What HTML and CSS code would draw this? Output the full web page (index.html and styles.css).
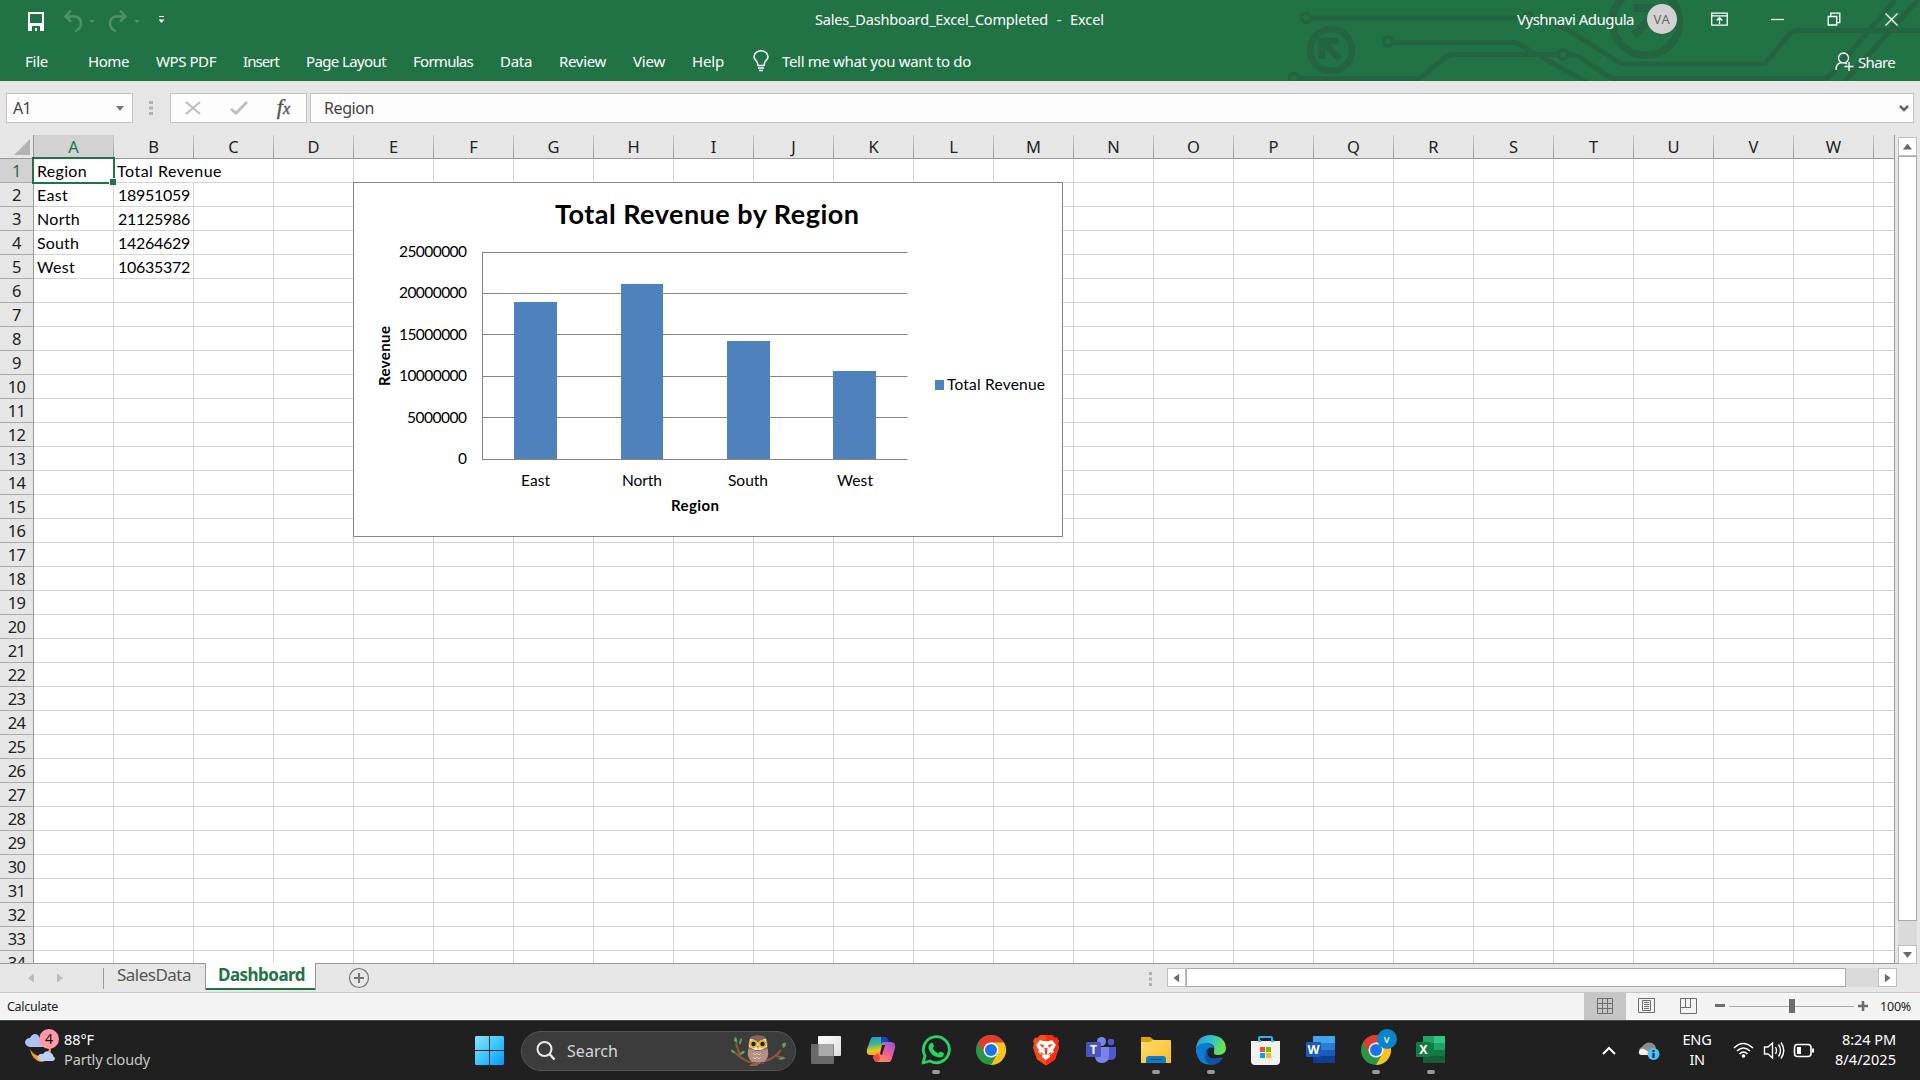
FILE: index.html
```html
<!DOCTYPE html>
<html lang="en">
<head>
<meta charset="utf-8">
<title>Sales_Dashboard_Excel_Completed - Excel</title>
<link rel="stylesheet" href="styles.css">
</head>
<body>
<header class="ribbon">
  <svg class="circuit" width="640" height="81" viewBox="0 0 640 81" fill="none" stroke="#246440" stroke-width="5">
    <circle cx="26" cy="18" r="4.5" stroke-width="3.5"/><path d="M31 18H243"/>
    <circle cx="248" cy="17" r="4.5" stroke-width="3.5"/><path d="M252 20l12 0 24 10 46 29q6 5 12 5h134q5 0 8-4l20-24q4-5.500 10-5.500H640"/>
    <circle cx="108" cy="41.500" r="4.500" stroke-width="3.500"/><path d="M113 42.500h119q5 0 12 5l65 36"/>
    <circle cx="283" cy="54.500" r="4.500" stroke-width="3.500"/><path d="M278 54.500H173q-5 0-9 4l-18 15q-4 5-10 5H19"/>
    <circle cx="14" cy="78" r="4.500" stroke-width="3.500"/>
    <path d="M288 54.500q10 0 17 6l20 14q5 4 12 4h166q5 0 9-5L580 0M636 0L563 83" transform="translate(0 0)" visibility="hidden"/>
    <path d="M288 54.500q10 0 17 6l20 14q5 4 12 4h206q5 0 9-5L615 0M638 0L563 83"/>
    <circle cx="51" cy="50" r="21" stroke-width="6.500"/>
    <path d="M41.500 59V41H59M44 43l15.500 16" stroke-width="6.500"/>
    <circle cx="366" cy="22" r="33.500" stroke-width="7.500"/>
    <path d="M353 8h32v26M383 7l-29 28" stroke-width="8"/>
  </svg>
  <div class="titlebar">
    <svg class="quick" width="180" height="38" viewBox="0 0 180 38" fill="none">
      <path d="M29 15h14v17H29z" stroke="#fff" stroke-width="2"/>
      <path d="M28 25h16v8H28z" fill="#fff"/>
      <path d="M32 28h8v5h-3v-3h-2v3h-3z" fill="#217346"/>
      <path d="M71 13l-5.500 6 5.500 5M66 19h8q7 0 7 7 0 5-6 8" transform="translate(0 -.5)" stroke="#4e8f6b" stroke-width="2.500"/>
      <path d="M89 22h6l-3 3z" fill="#4e8f6b"/>
      <path d="M120 13l5.500 6-5.500 5M125 19h-8q-7 0-7 7 0 5 6 8" transform="translate(0 -.5)" stroke="#4e8f6b" stroke-width="2.500"/>
      <path d="M134 22h6l-3 3z" fill="#4e8f6b"/>
      <path d="M159 18.500h5" stroke="#fff"/><path d="M158.500 21.500h6l-3 3.500z" fill="#fff"/>
    </svg>
    <div class="doc"><span data-w="233">Sales_Dashboard_Excel_Completed</span><span>-</span><span data-w="34">Excel</span></div>
    <div class="account"><span data-w="117">Vyshnavi Adugula</span><div class="avatar"><span data-w="17">VA</span></div></div>
    <svg class="winbtns" width="200" height="38" viewBox="0 0 200 38" fill="none" stroke="#fff" stroke-width="1.300">
      <path d="M9.700 13.200h15.500v12H9.700zM9.700 15.800h15.500M17.500 24v-6M14.700 20.500l2.800-2.800 2.800 2.800"/>
      <path d="M69 19.500h13"/>
      <path d="M126.200 16.500h8.500v8.500h-8.500zM128.800 16v-2.800h9v9.500h-2.800"/>
      <path d="M183.500 13.500l12 12M195.500 13.500l-12 12"/>
    </svg>
  </div>
  <nav class="menu">
    <span class="file" data-w="23">File</span><span data-w="41">Home</span><span data-w="60">WPS PDF</span><span data-w="36">Insert</span><span data-w="80">Page Layout</span><span data-w="60">Formulas</span><span data-w="32">Data</span><span data-w="47">Review</span><span data-w="32">View</span><span data-w="32">Help</span>
    <svg class="bulb" width="16" height="22" viewBox="0 0 16 22" fill="none" stroke="#fff" stroke-width="1.500"><path d="M5 15.500q0-3-2-5Q1 8.500 1 7a7 6.300 0 0 1 14 0q0 1.500-2 3.500t-2 5zM5 18h6M6 20.500h4"/></svg>
    <span data-w="189">Tell me what you want to do</span>
    <div class="share"><svg width="19" height="20" viewBox="0 0 19 20" fill="none" stroke="#fff" stroke-width="1.300"><circle cx="8.500" cy="6" r="5"/><path d="M1 18q0-7 6-7.500M10 11l2 .8M14 10v9M9.500 14.500h9"/></svg><span data-w="37">Share</span></div>
  </nav>
</header>

<section class="formula">
  <div class="box namebox"><span data-w="18">A1</span><svg width="8" height="5"><path d="M0 0h8L4 5z" fill="#777"/></svg></div>
  <svg class="grip" width="4" height="14"><path d="M0 0h4v3H0zM0 5.500h4v3H0zM0 11h4v3H0z" fill="#b0b0b0"/></svg>
  <div class="box fx">
    <svg width="16" height="14" viewBox="0 0 16 14" fill="none" stroke="#bdbdbd" stroke-width="2"><path d="M1 1l14 12M15 1L1 13"/></svg>
    <svg width="18" height="14" viewBox="0 0 18 14" fill="none" stroke="#bdbdbd" stroke-width="2.800"><path d="M1 8l5 4L17 1"/></svg>
    <span class="fxlabel">f<small>x</small></span>
  </div>
  <div class="box input"><span data-w="50">Region</span><svg width="10" height="7" fill="none"><path d="M1 1l4 4 4-4" stroke="#666" stroke-width="2.500"/></svg></div>
</section>

<main class="workarea">
  <div class="sheet">
    <div class="cols" id="cols"></div>
    <div class="rows" id="rows"></div>
    <div class="selection"></div>
    <svg class="chart" width="710" height="355" viewBox="353 182 710 355">
      <rect x="353.500" y="182.500" width="709" height="354" fill="#fff" stroke="#868686"/>
      <g stroke="#868686"><path d="M482.500 252.500H907.500M482 293.500H907.500M482 334.500H907.500M482 376.500H907.500M482 417.500H907.500M482.500 252V460"/></g>
      <g fill="#4f81bd"><path d="M514 302h43v157h-43zM621 284h42v175h-42zM727 341h43v118h-43zM833 371h43v88h-43z"/><path d="M935 380h9v10h-9z"/></g>
      <path d="M482 459.500H907.500" stroke="#868686"/>
      <text class="ctitle" x="555" y="224" textLength="304">Total Revenue by Region</text>
      <g class="axis">
        <text x="399" y="257" textLength="68">25000000</text><text x="399" y="298" textLength="68">20000000</text><text x="399" y="340" textLength="68">15000000</text><text x="399" y="381" textLength="68">10000000</text><text x="407" y="423" textLength="60">5000000</text><text x="458" y="464" textLength="9">0</text>
        <text x="521" y="486" textLength="29">East</text><text x="622" y="486" textLength="40">North</text><text x="728" y="486" textLength="40">South</text><text x="837" y="486" textLength="36">West</text>
        <text x="947" y="390" textLength="98">Total Revenue</text>
        <text class="b" x="671" y="511" textLength="48">Region</text>
        <text class="b" transform="translate(390 386) rotate(-90)" textLength="60">Revenue</text>
      </g>
    </svg>
  </div>
  <div class="vscroll"><div class="btn up"></div><div class="vthumb"></div><div class="vtrack"></div><div class="btn down"></div></div>
</main>

<section class="tabbar">
  <svg class="tabnav" width="104" height="26"><path d="M34 9.500v9l-6-4.500zM57 9.500v9l6-4.500z" fill="#bdbdbd"/><path d="M103.500 4v21" stroke="#999"/></svg>
  <div class="tab"><span data-w="74">SalesData</span></div>
  <div class="tab active"><span data-w="87">Dashboard</span></div>
  <svg class="add" width="22" height="22" fill="none" stroke="#777"><circle cx="11" cy="11" r="9.500" stroke-width="1.200"/><path d="M11 6v10M6 11h10" stroke-width="2"/></svg>
  <svg class="hgrip" width="4" height="14"><path d="M0 0h3v3H0zM0 5.500h3v3H0zM0 11h3v3H0z" fill="#b0b0b0"/></svg>
  <div class="hscroll"><div class="btn left"></div><div class="hthumb"></div><div class="htrack"></div><div class="btn right"></div></div>
</section>

<section class="status">
  <span data-w="51">Calculate</span>
  <svg class="views" width="290" height="27" viewBox="1584 993 290 27" fill="none" stroke="#6d6d6d">
    <path d="M1584 993h42v27h-42z" fill="#c6c6c6" stroke="none"/>
    <path d="M1597.500 998.500h15v15h-15zM1597 1003.500h16M1597 1008.500h16M1602.500 998v16M1607.500 998v16"/>
    <path d="M1638.500 998.500h16v14h-16zM1642.500 1000.500h8v10h-8zM1644 1002.500h5M1644 1004.500h5M1644 1006.500h5M1644 1008.500h5"/>
    <path d="M1680.500 998.500h16v15h-16zM1685.500 998v9M1690.500 998v9M1680 1007.500h11"/>
    <path d="M1715 1005.500h10" stroke-width="3"/><path d="M1729 1006.500h125" stroke="#a8a8a8"/>
    <path d="M1789 999h6v14h-6z" fill="#6d6d6d" stroke="none"/><path d="M1858 1006h10M1863 1001v10" stroke-width="2.500"/>
  </svg>
  <span class="zoom" data-w="31">100%</span>
</section>

<footer class="taskbar">
  <div class="weather">
    <svg width="36" height="36" viewBox="0 0 36 36"><path d="M28 13q1 13-10 15-6 0-10-7 2 12 12 13 12-3 8-21z" fill="#f59b23"/><path d="M8 19q-5-1-5-5 1-4 5-4 3-6 8-3l6 12z" fill="#a9c4f5"/><path d="M19 33q-4-1-3-5 2-3 5-2 3-5 8-1 3 2 2 3 4 3 0 5z" fill="#b9d1fa"/><circle cx="27" cy="11" r="10" fill="#ff99a4"/><text x="23" y="16" class="badge">4</text></svg>
    <div class="wtext"><span data-w="30">88°F</span><span class="dim" data-w="86">Partly cloudy</span></div>
  </div>
  <svg class="start" width="29" height="29"><defs><linearGradient id="win" x2="1" y2="1" gradientUnits="userSpaceOnUse" x1="0" y1="0" gradientTransform="scale(29)"><stop stop-color="#8be0fd"/><stop offset=".5" stop-color="#3cc8ff"/><stop offset="1" stop-color="#0795fb"/></linearGradient></defs><path d="M1 0h13v14H0V1zM15 0h13l1 1v13H15zM0 15h14v14H1l-1-1zM15 15h14v13l-1 1H15z" fill="url(#win)"/></svg>
  <div class="search">
    <svg width="20" height="20" fill="none" stroke="#e6e9ee" stroke-width="2"><circle cx="8.500" cy="8" r="7"/><path d="M13.500 13l5 5.500" stroke-width="2.500"/></svg>
    <span data-w="51">Search</span>
    <svg class="owl" width="56" height="32" viewBox="0 0 56 32"><path d="M3 17q8 7 15 10 8 1 16-1 9-2 16-11M9 21L5 8M45 21l8 2" fill="none" stroke="#8d5637" stroke-width="2.200"/><path d="M3 6q0-4 2-4 2 4 1 6zM8 8q1-5 3-5 0 4-2 7zM0 15q3-1 4 3-3 1-4-3zM9 18q4-4 5-1-2 3-5 3zM51 9q4-3 4 0-1 4-3 4zM47 24q5-3 8-1-4 3-8 1z" fill="#58a760"/><path d="M18 12q-3 8 1 13 3 4 8 4t8-4q4-5 1-13z" fill="#b39182"/><path d="M18 6q0-4 4-5 5-1.500 10 0 4 1 4 5 3 8-4 9-5 2-10 0-7-1-4-9z" fill="#86655d"/><path d="M19 4q5 0 8 4 3-4 8-4l1 8-6 3h-6l-6-3z" fill="#f6e6c8"/><circle cx="22.500" cy="9" r="4" fill="#e0b62a"/><circle cx="31.500" cy="9" r="4" fill="#e0b62a"/><circle cx="22.500" cy="9" r="2.200" fill="#222"/><circle cx="31.500" cy="9" r="2.200" fill="#222"/><path d="M25.700 11h2.600L27 14.500z" fill="#b88b4c"/><path d="M22 18l2 2 2-2 2 2 2-2M22 22l2 2 2-2 2 2 2-2" stroke="#dcc6b8" fill="none"/><path d="M21 27h4v2h-4zM29 27h4v2h-4z" fill="#55458d"/><path d="M18 31q2-4 12-4l-4 4z" fill="#9a5f3f"/></svg>
  </div>
  <div class="apps">
    <div class="app"><svg viewBox="0 0 30 30"><defs><linearGradient id="tv" x2="1" y2="1"><stop stop-color="#fff"/><stop offset="1" stop-color="#ddd"/></linearGradient></defs><rect x="7" y="1" width="23" height="20" rx="1" fill="url(#tv)"/><rect y="9" width="23" height="20" rx="1" fill="#777" opacity=".85"/><path d="M8 9h14v12H8z" fill="#aaa"/></svg></div>
    <div class="app"><svg viewBox="0 0 30 30"><defs><linearGradient id="ca" x2=".2" y2="1"><stop stop-color="#1597e8"/><stop offset=".45" stop-color="#3fb78c"/><stop offset=".8" stop-color="#f4c51c"/><stop offset="1" stop-color="#ffa02a"/></linearGradient><linearGradient id="cb" x1="1" x2=".2" y2="1"><stop stop-color="#8a57e8"/><stop offset=".5" stop-color="#ef5b9b"/><stop offset="1" stop-color="#ff9a4c"/></linearGradient></defs><path d="M23 27H12q-4 0-5-5 4 0 5-4l3-8q1-3 4-3h6q5 0 4 6l-3 10q-1 4-3 4z" fill="url(#cb)"/><path d="M7 2h11q3 0 3 4-3 0-4 4l-3 7q-1 3-4 3H4q-4 0-3-6L4 6q1-4 3-4z" fill="url(#ca)"/><path d="M15 2h3q4 0 5 5h-5q-2 0-3 2z" fill="#1946c8"/><path d="M7 20q4 0 5-2l2 5q-1 4-3 4-4-1-4-7z" fill="#ee4a3b"/><path d="M14 19l2-9h3l-3 10z" fill="#202020"/></svg></div>
    <div class="app run"><svg viewBox="0 0 30 30" fill="none"><path d="M2 28l2-7A13 13 0 1 1 9 26z" stroke="#25d366" stroke-width="2.800" stroke-linejoin="round"/><path d="M10 8q2-1 3 3 0 1-1.500 2 2 4 6 5.500l1.500-2q4 1 4 2.500-1 4-5 3.500-8-1-10.500-9Q7 10 10 8z" fill="#25d366"/></svg></div>
    <div class="app"><svg viewBox="0 0 30 30"><g id="chrome"><circle cx="15" cy="15" r="15" fill="#2a9747"/><path d="M2 7.500A15 15 0 0 1 28 7.500H15L8.500 19z" fill="#e33b2e"/><path d="M28 7.500A15 15 0 0 1 15 30l6.500-11.300L15 7.500z" fill="#fcc31a"/><circle cx="15" cy="15" r="7.500" fill="#fff"/><circle cx="15" cy="15" r="6" fill="#1a73e8"/></g></svg></div>
    <div class="app"><svg viewBox="0 0 30 30"><path d="M9 0h12l3 3 2-.5 2 4-1 2 1 4-4 12-9 6-9-6-4-12 1-4-1-2 2-4L6 3z" fill="#fb4a1c"/><path d="M15 0h6l3 3 2-.5 2 4-1 2 1 4-4 12-9 6z" fill="#ff2a10"/><path d="M9 5l3 1h6l3-1 4 5-3 5 1 2-4 3v2l-4 3-4-3v-2l-4-3 1-2-3-5z" fill="#fff"/><path d="M8 9l5 1-1 3zM22 9l-5 1 1 3zM13.500 13h3l-.5 6-1 1-1-1zM10 17l4 3-4-1zM20 17l-4 3 4-1z" fill="#fb3d18"/></svg></div>
    <div class="app"><svg viewBox="0 0 30 30"><circle cx="15.500" cy="6.500" r="4.500" fill="#7b83eb"/><circle cx="25" cy="7" r="3.200" fill="#5059c9"/><path d="M22 12h8v8q0 5-6 5h-3z" fill="#5059c9"/><path d="M9 12h14v9q0 7-7 7-6 0-7-6z" fill="#7b83eb"/><rect y="7" width="15" height="15" rx="1.500" fill="#4b53bc"/><text x="4" y="19" class="glyph small">T</text></svg></div>
    <div class="app run"><svg viewBox="0 0 30 30"><defs><linearGradient id="fo" x2="1" y2="1"><stop stop-color="#ffdc70"/><stop offset="1" stop-color="#fcbc26"/></linearGradient></defs><path d="M0 3q0-1 1-1h8l4 3h16v8H0z" fill="#e0a008"/><path d="M0 7h9l3-2h17q1 0 1 1v22H0z" fill="url(#fo)"/><path d="M5 28v-4q0-3 3-3h14q3 0 3 3v4z" fill="#0f7cc8"/><path d="M9 24.500h12" stroke="#074f88"/></svg></div>
    <div class="app run"><svg viewBox="0 0 30 30"><defs><linearGradient id="ed" x2="1" y2=".3"><stop stop-color="#239ade"/><stop offset=".6" stop-color="#36c6c0"/><stop offset="1" stop-color="#6be34a"/></linearGradient></defs><path d="M0 14Q1 0 15 0q14 1 15 13 0 7-8 7-5 0-4-3 2-8-6-9Q3 8 0 14z" fill="url(#ed)"/><path d="M0 14Q3 7 11 8q6 1 7 5-6-2-8 4-1 9 8 12Q3 32 0 17z" fill="#0c7bd6"/><path d="M12 13q-3 12 9 10 5-1 6 0-4 7-12 7-7-3-6-10 1-5 3-7z" fill="#1250a4"/></svg></div>
    <div class="app"><svg viewBox="0 0 30 30"><path d="M8 8V3q0-1 1-1h11q1 0 1 1v5" fill="none" stroke="#29b6ec" stroke-width="2"/><path d="M0 6h29v20q0 4-4 4H4q-4 0-4-4z" fill="#f1f1f1"/><path d="M7 5h3v2H7zM20 5h3v2h-3z" fill="#29b6ec"/><path d="M9 12h5v5H9z" fill="#f25022"/><path d="M15 12h5v5h-5z" fill="#7fba00"/><path d="M9 18h5v5H9z" fill="#00a4ef"/><path d="M15 18h5v5h-5z" fill="#ffb900"/></svg></div>
    <div class="app"><svg viewBox="0 0 30 30"><path d="M7 1h22v7H7z" fill="#41a5ee"/><path d="M7 8h22v7H7z" fill="#2b7cd3"/><path d="M7 15h22v6H7z" fill="#185abd"/><path d="M7 21h22v7H7z" fill="#103f91"/><rect y="7" width="15" height="15" rx="1" fill="#185abd"/><text x="1.500" y="19" class="glyph">W</text></svg></div>
    <div class="app run"><svg viewBox="0 0 30 30"><use href="#chrome"/><circle cx="26" cy="4" r="10" fill="#0a84c8"/><text x="22.700" y="7.500" class="glyph tiny">V</text></svg></div>
    <div class="app run"><svg viewBox="0 0 30 30"><path d="M7 1h11v7H7z" fill="#21a366"/><path d="M18 1h11v7H18z" fill="#33c481"/><path d="M7 8h11v7H7z" fill="#107c41"/><path d="M18 8h11v7H18z" fill="#21a366"/><path d="M7 15h22v6H7z" fill="#107c41"/><path d="M7 21h22v7H7z" fill="#185c37"/><rect y="7" width="15" height="15" rx="1" fill="#107c41"/><text x="3.200" y="19" class="glyph">X</text></svg></div>
  </div>
  <svg class="chev" width="16" height="10" fill="none"><path d="M2 8l6-6 6 6" stroke="#fff" stroke-width="2"/></svg>
  <svg class="cloud" width="22" height="20"><path d="M2 12q-2-5 2-6Q8 0 14 2q4 2 4 6v5z" fill="#8d8d8d"/><path d="M3 14q-3-1-2-4 1-3 5-2l10 6z" fill="#eee"/><circle cx="15.500" cy="13" r="6" fill="#4cc2ff"/><path d="M14.500 9h2v2h-2zM14.500 12h2v5h-2z" fill="#111"/></svg>
  <div class="lang"><span data-w="29">ENG</span><span data-w="15">IN</span></div>
  <svg class="tray" width="82" height="22" viewBox="0 0 82 22" fill="none" stroke="#fff" stroke-width="1.600"><path d="M1 9q9-9 19 0M4 12q6.500-6 13 0M6.500 15q4-4 8 0"/><circle cx="10.500" cy="17" r="1.800" fill="#fff" stroke="none"/><path d="M31.500 8h3.500l4.500-4v15L35 15h-3.500zM42.500 8q2 3.500 0 7M45.500 5.500q4 6 0 12M48 3.500q5.500 8 0 16" stroke-width="1.400"/><rect x="61.500" y="5.500" width="16.500" height="12" rx="3"/><path d="M64 8h4v7h-4zM79 9.500h2v4h-2z" fill="#fff" stroke="none"/></svg>
  <div class="clock"><span data-w="54">8:24 PM</span><span data-w="61">8/4/2025</span></div>
</footer>
<script src="app.js"></script>
</body>
</html>
```
FILE: app.js
```js
// Sheet contents, one array per row
const data = [
  ['Region', 'Total Revenue'],
  ['East', '18951059'],
  ['North', '21125986'],
  ['South', '14264629'],
  ['West', '10635372'],
];
const widths = { 'Region': 50, 'Total Revenue': 105, 'East': 31, 'North': 43, 'South': 42, 'West': 38 };
const letters = 'ABCDEFGHIJKLMNOPQRSTUVW'.split('');

document.getElementById('cols').innerHTML =
  '<div class="corner"></div>' +
  letters.map((l, i) => `<div class="col${i === 0 ? ' sel' : ''}">${l}</div>`).join('');

let html = '';
for (let r = 0; r < 34; r++) {
  html += `<div class="row"><div class="num${r === 0 ? ' sel' : ''}">${r + 1}</div>`;
  for (let c = 0; c < 24; c++) {
    const v = (data[r] || [])[c] || '';
    const num = /^\d+$/.test(v);
    const cls = 'cell' + (num ? ' right' : '') + (r === 0 && c === 1 ? ' spill' : '');
    html += `<div class="${cls}">${v ? `<span data-w="${num ? 72 : widths[v]}">${v}</span>` : ''}</div>`;
  }
  html += '</div>';
}
document.getElementById('rows').innerHTML = html;

// Track each label so that it takes its set width
document.querySelectorAll('[data-w]').forEach((el) => {
  const natural = el.getBoundingClientRect().width;
  el.style.letterSpacing = (Number(el.dataset.w) - natural) / el.textContent.length + 'px';
});
```
FILE: styles.css
```css
* { box-sizing: border-box; }
body { margin: 0; width: 1920px; height: 1080px; overflow: hidden; display: flex; flex-direction: column; background: #e6e6e6; font: 15px/20px "Noto Sans", "Open Sans", sans-serif; color: #222; }
svg { display: block; flex: none; overflow: visible; }
span { white-space: pre; flex: none; }

.ribbon { position: relative; height: 81px; background: #217346; color: #fff; overflow: hidden; }
.circuit { position: absolute; left: 1280px; top: 0; }
.titlebar { position: relative; height: 38px; display: flex; align-items: center; }
.quick { margin-top: -1px; }
.quick { margin-bottom: 3px; }
.doc { display: flex; margin-left: 635px; width: 290px; font-size: 14.5px; justify-content: space-between; padding-right: 1px; }
.account { display: flex; align-items: center; gap: 13px; margin-left: 412px; }
.avatar { width: 30px; height: 30px; border-radius: 50%; background: #d2d2d2; color: #666; font-size: 13px; display: flex; align-items: center; justify-content: center; }
.winbtns { margin-left: 25px; }
.menu { position: relative; display: flex; align-items: center; gap: 27px; height: 43px; padding: 4px 25px 0 25px; }
.menu .file { margin-right: 13px; }
.menu > span { margin-top: -2px; }
.bulb { margin: -2px -14px 0 2px; }
.share { display: flex; align-items: center; gap: 4px; margin: 1px 0 0 auto; }

.formula { height: 54px; padding: 12px 6px 0; display: flex; align-items: flex-start; }
.box { height: 30px; background: #fdfdfd; border: 1px solid #c3c3c3; display: flex; align-items: center; color: #444; font-size: 16px; }
.namebox { width: 127px; padding: 0 8px 0 6px; justify-content: space-between; }
.grip { margin: 8px 17px 0 16px; }
.fx { width: 137px; padding: 0 16px 0 14px; justify-content: space-between; }
.fxlabel { font: italic 22px/24px "Liberation Serif", serif; color: #555; -webkit-text-stroke: .4px #555; }
.fxlabel small { font-size: 16px; }
.input { width: 1604px; margin-left: 3px; padding: 0 4px 0 13px; justify-content: space-between; }

.workarea { display: flex; height: 828px; }
.sheet { position: relative; width: 1895px; overflow: hidden; background: #fff; border-right: 1px solid #999; }
.cols { display: flex; height: 24px; width: 1896px; background: #e6e6e6; border-bottom: 1px solid #999; }
.corner { width: 34px; flex: none; background: linear-gradient(#999, #999) right / 1px 100% no-repeat; }
.corner::after { content: ""; display: block; width: 16px; height: 16px; margin: 4px 0 0 14px; background: #b3b3b3; clip-path: polygon(100% 0, 100% 100%, 0 100%); }
.col { width: 80px; flex: none; padding-right: 1px; text-align: center; font-size: 16.5px; line-height: 24px; color: #222; background: linear-gradient(#ccc, #999) right / 1px 100% no-repeat; }
.col.sel { background-color: #d2d2d2; color: #217346; }
.row { display: flex; height: 24px; width: 1960px; }
.num { width: 34px; flex: none; padding: 0 6px; text-align: center; font-size: 16.5px; line-height: 24px; letter-spacing: -.6px; background: #e6e6e6; border-right: 1px solid #999; border-bottom: 1px solid #ababab; }
.num.sel { background: #d2d2d2; color: #217346; }
.cell { width: 80px; flex: none; padding: 0 3px; border-right: 1px solid #d4d4d4; border-bottom: 1px solid #d4d4d4; font: 16px/24px Lato, sans-serif; color: #000; display: flex; }
.cell.right { justify-content: flex-end; }
.cell.spill { border-right-color: transparent; }
.selection { position: absolute; left: 32px; top: 22px; width: 83px; height: 27px; border: 2px solid #217346; }
.selection::after { content: ""; position: absolute; right: -3px; bottom: -3px; width: 6px; height: 6px; background: #217346; border: solid #fff; border-width: 1px 0 0 1px; }
.chart { position: absolute; left: 353px; top: 47px; }
.ctitle { font: bold 27px Lato, sans-serif; }
.axis { font: 15.5px Lato, sans-serif; }
.axis .b { font-weight: bold; font-size: 15px; }

.vscroll { display: flex; flex-direction: column; padding: 2px 0 0 3px; }
.btn { width: 19px; height: 19px; flex: none; background: #fff; border: 1px solid #c0c0c0; display: flex; align-items: center; justify-content: center; }
.btn::after { content: ""; width: 9px; height: 6px; background: #6a6a6a; clip-path: polygon(50% 0, 100% 100%, 0 100%); }
.btn.down::after { transform: rotate(180deg); }
.btn.left::after { transform: rotate(-90deg); }
.btn.right::after { transform: rotate(90deg); }
.vthumb { width: 19px; height: 765px; flex: none; background: #fff; border: 1px solid #ababab; }
.vtrack { width: 19px; height: 24px; flex: none; background: #dadada; }

.tabbar { height: 29px; display: flex; border-top: 1px solid #999; margin-right: 22px; }
.tab { width: 101px; flex: none; padding-left: 13px; font-size: 17px; line-height: 21px; color: #555; }
.tab.active { width: 111px; height: 27px; margin-top: -1px; padding-left: 12px; line-height: 23px; font-weight: bold; color: #217346; background: #fff; border: solid #999; border-width: 0 1px; box-shadow: inset 0 -2px #217346; }
.add { margin: 3px 0 0 32px; }
.hgrip { margin: 8px 0 0 779px; }
.hscroll { display: flex; margin: 4px 0 0 14px; }
.hthumb { width: 660px; height: 19px; flex: none; background: #fff; border: 1px solid #ababab; }
.htrack { width: 32px; height: 19px; flex: none; background: #dadada; }

.status { height: 28px; display: flex; align-items: center; background: #f3f3f3; border-top: 1px solid #c6c6c6; padding-left: 7px; font-size: 12.5px; }
.views { margin-left: 1526px; }
.zoom { margin-left: 6px; }

.taskbar { height: 60px; background: #202020; border-top: 1px solid #4a4a4a; color: #fff; display: flex; align-items: center; }
.weather { display: flex; gap: 6px; width: 475px; padding-left: 22px; align-items: center; }
.weather svg { margin-top: -9px; }
.badge { font: 14px "Noto Sans", sans-serif; fill: #111; }
.wtext, .lang, .clock { display: flex; flex-direction: column; align-items: flex-start; font-size: 14.5px; line-height: 20px; margin-top: -3px; }
.dim { color: #c8c8c8; }
.search { width: 275px; height: 40px; margin-left: 17px; border-radius: 20px; border: 1px solid #555; background: #3c3c3c; display: flex; align-items: center; padding: 0 8px 0 14px; color: #d6d6d6; font-size: 16px; }
.search span { margin-left: 11px; }
.owl { margin-left: auto; }
.apps { display: flex; gap: 25px; margin: -1px 0 0 15px; }
.app { position: relative; width: 30px; }
.app svg { width: 30px; height: 30px; }
.run::after { content: ""; position: absolute; left: 11px; top: 35px; width: 8px; height: 4px; border-radius: 2px; background: #999; }
.glyph { font: bold 12.5px "Noto Sans", sans-serif; fill: #fff; }
.small { font-size: 12px; }
.tiny { font-size: 9px; fill: #d5ecfa; }
.chev { margin-left: 155px; }
.cloud { margin-left: 21px; }
.lang { align-items: center; margin-left: 21px; width: 32px; }
.tray { margin: -2px 0 0 20px; }
.clock { align-items: flex-end; margin-left: auto; padding-right: 24px; }
```
